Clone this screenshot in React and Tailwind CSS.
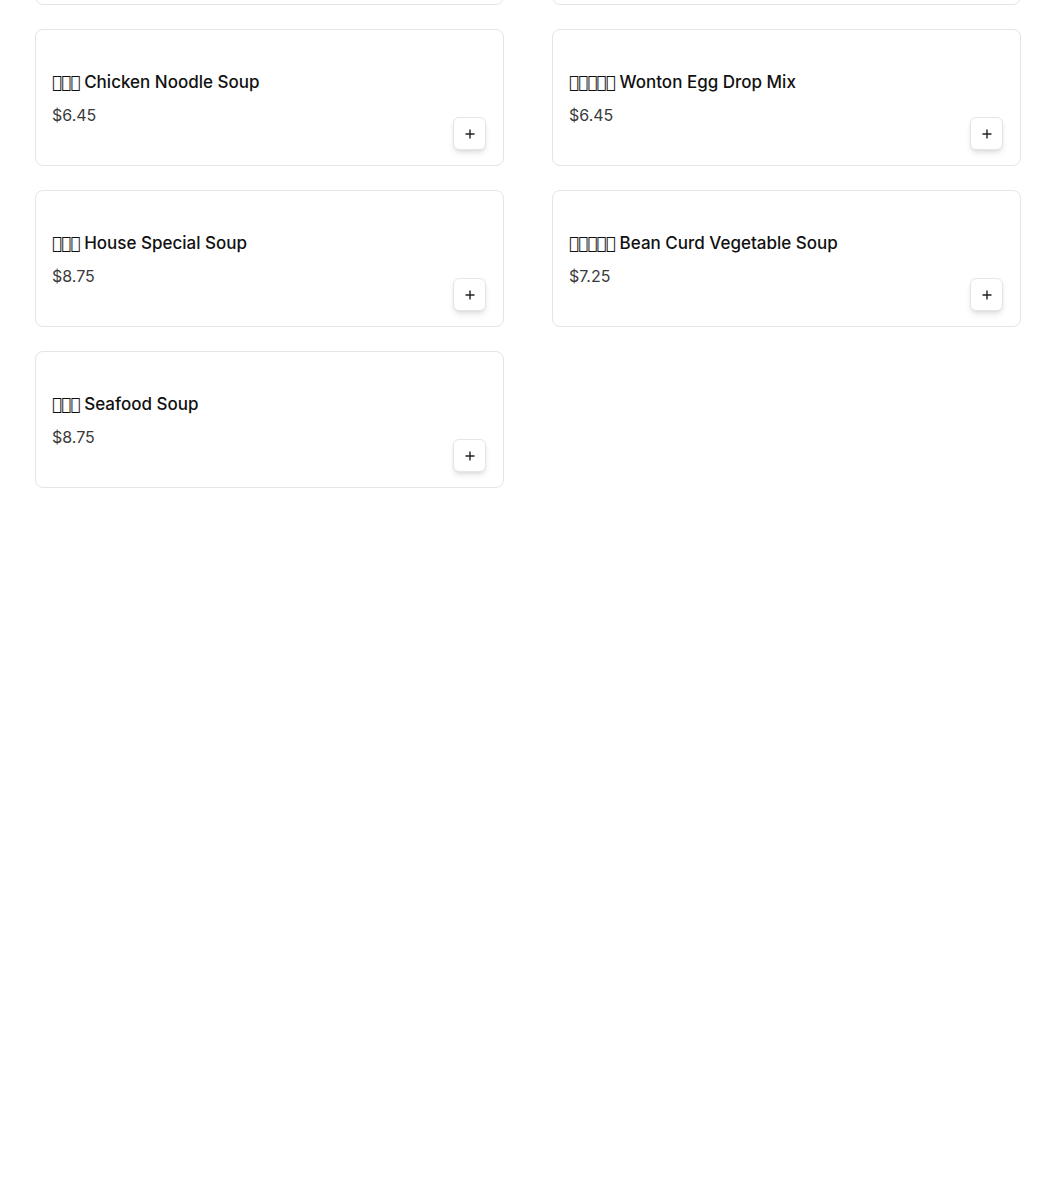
import React from "react";

const T = "\uE000";
const items = [
  { zh: T + T + T, name: "Chicken Noodle Soup", price: "$6.45" },
  { zh: T + T + T + T + T, name: "Wonton Egg Drop Mix", price: "$6.45" },
  { zh: T + T + T, name: "House Special Soup", price: "$8.75" },
  { zh: T + T + T + T + T, name: "Bean Curd Vegetable Soup", price: "$7.25" },
  { zh: T + T + T, name: "Seafood Soup", price: "$8.75" },
];

function Card({ item }) {
  return (
    <div className="h-[137px] rounded-lg border border-[#e5e5e5] bg-white px-4 pt-[40px] relative">
      <div className="text-[17px] leading-6 font-medium text-[#111]">
        <span className="font-bold tracking-[-1px]" style={{ fontFamily: '"DejaVu Sans", sans-serif' }}>
          {item.zh}
        </span>{" "}
        {item.name}
      </div>
      <div className="mt-[9px] text-[16px] leading-6 font-normal text-[#3a3a3a]">{item.price}</div>
      <button className="absolute right-[17px] bottom-[15px] w-[33px] h-[33px] rounded-md border border-[#e5e5e5] bg-white shadow-md flex items-center justify-center">
        <svg width="10" height="10" viewBox="0 0 10 10">
          <path d="M5 0.5v9M0.5 5h9" stroke="#222" strokeWidth="1.4" />
        </svg>
      </button>
    </div>
  );
}

export default function App() {
  return (
    <div className="min-h-[1187px] bg-white" style={{ fontFamily: 'Inter, sans-serif' }}>
      <div className="pl-[35px] pr-[29px] -mt-[132px] grid grid-cols-2 gap-x-[48px] gap-y-[24px]">
        <div className="h-[137px] rounded-lg border border-[#e5e5e5] bg-white" />
        <div className="h-[137px] rounded-lg border border-[#e5e5e5] bg-white" />
        {items.map((it, i) => (
          <Card key={i} item={it} />
        ))}
      </div>
    </div>
  );
}
